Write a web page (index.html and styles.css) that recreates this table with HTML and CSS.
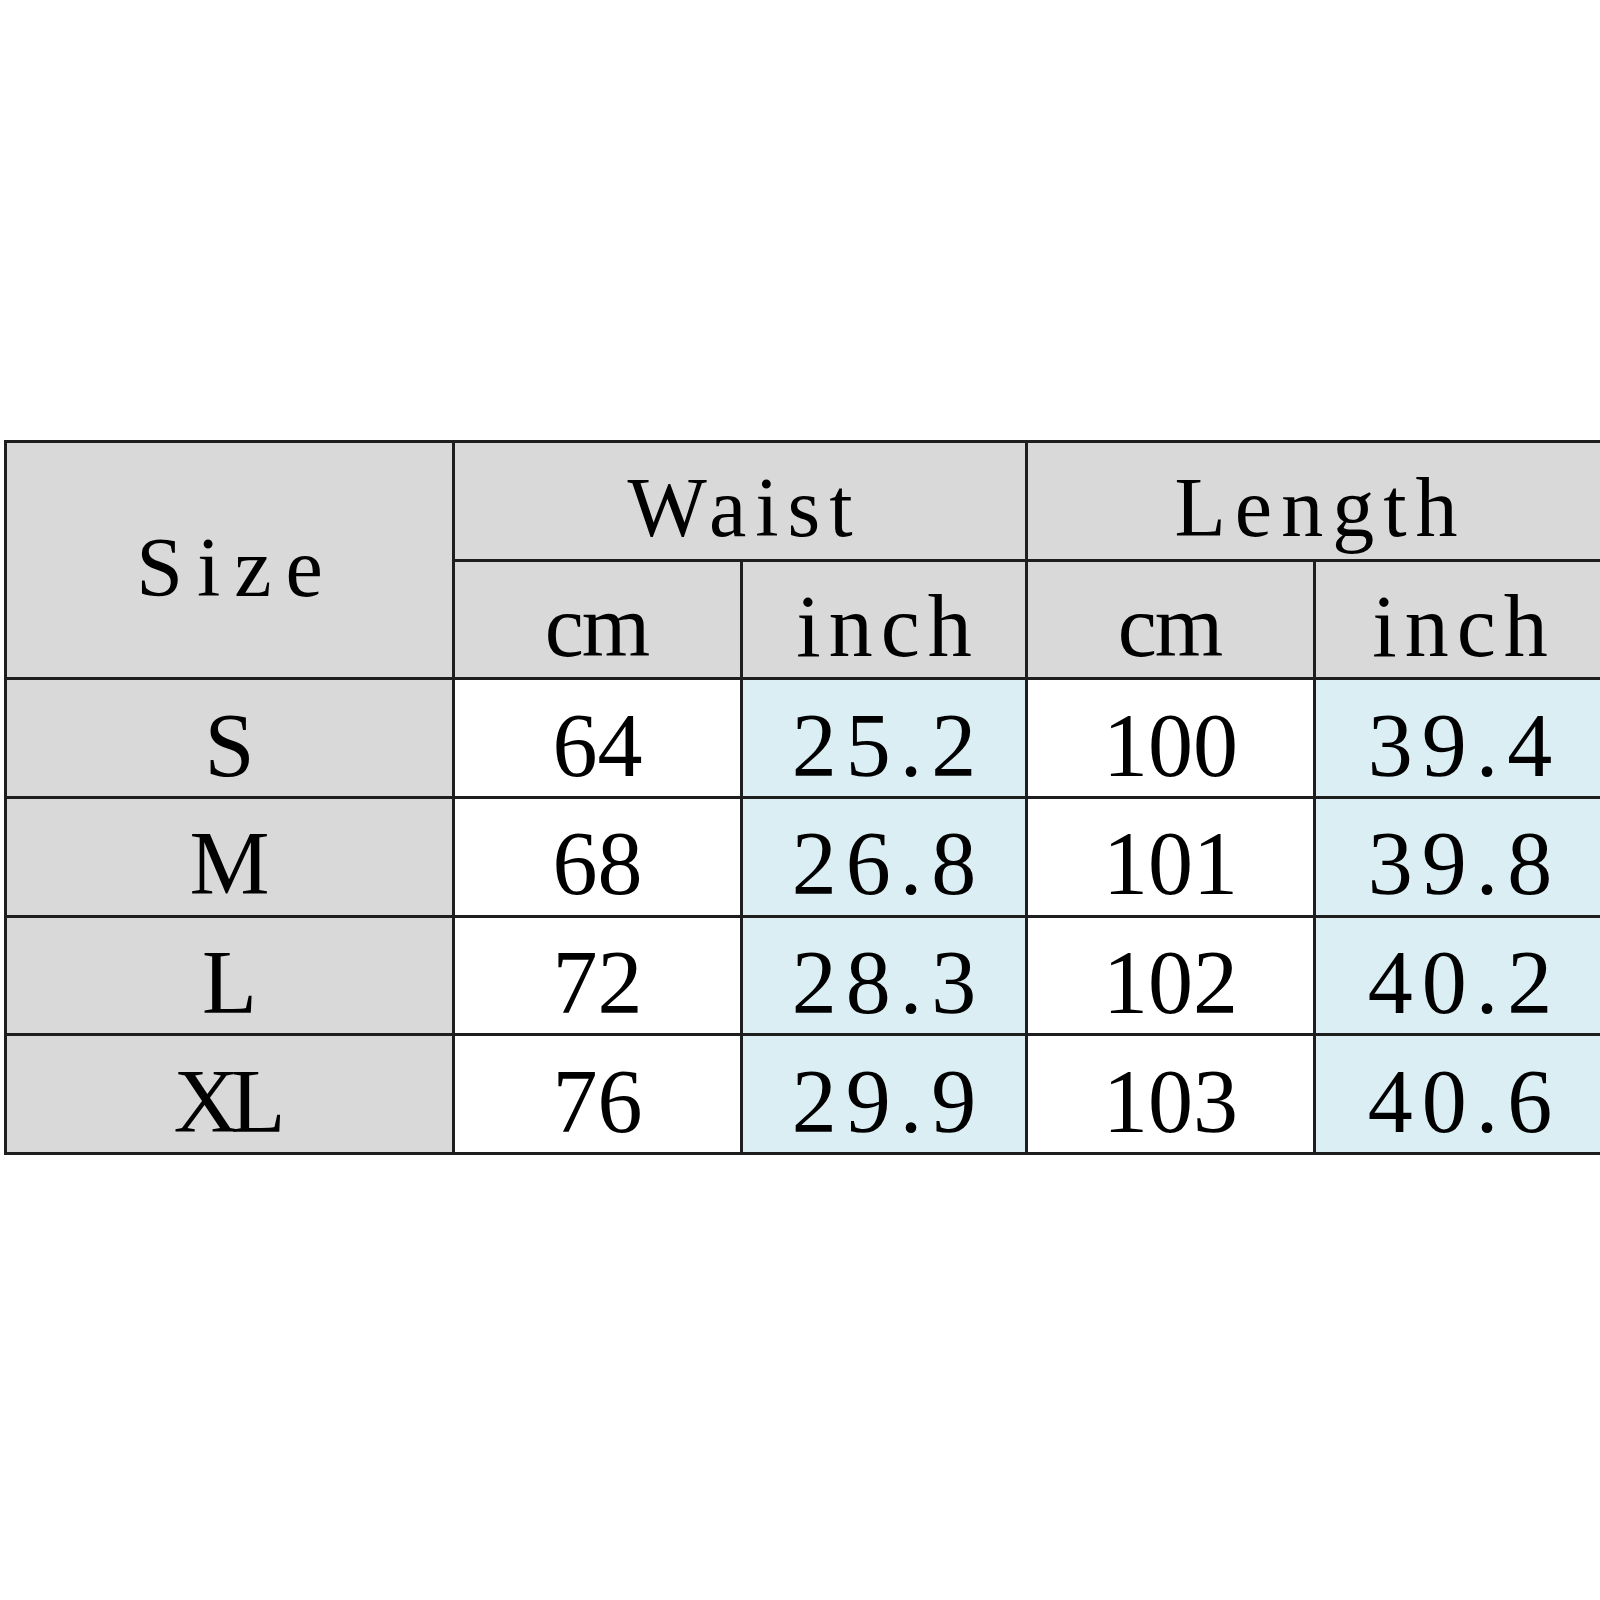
FILE: index.html
```html
<!DOCTYPE html>
<html lang="en">
<head>
<meta charset="utf-8">
<title>Size chart</title>
<link rel="stylesheet" href="styles.css">
</head>
<body>
<main class="page">
  <table class="chart">
    <colgroup>
      <col class="c-size">
      <col class="c-cm">
      <col class="c-in">
      <col class="c-cm">
      <col class="c-in2">
    </colgroup>
    <thead>
      <tr>
        <th class="hd size" rowspan="2">Size</th>
        <th class="hd group" colspan="2">Waist</th>
        <th class="hd group" colspan="2">Length</th>
      </tr>
      <tr>
        <th class="hd unit cm">cm</th>
        <th class="hd unit">inch</th>
        <th class="hd unit cm">cm</th>
        <th class="hd unit">inch</th>
      </tr>
    </thead>
    <tbody>
      <tr><th class="hd lbl">S</th><td class="num">64</td><td class="num blue dec">25.2</td><td class="num">100</td><td class="num blue dec">39.4</td></tr>
      <tr><th class="hd lbl narrow">M</th><td class="num">68</td><td class="num blue dec">26.8</td><td class="num">101</td><td class="num blue dec">39.8</td></tr>
      <tr><th class="hd lbl">L</th><td class="num">72</td><td class="num blue dec">28.3</td><td class="num">102</td><td class="num blue dec">40.2</td></tr>
      <tr><th class="hd lbl narrow">XL</th><td class="num">76</td><td class="num blue dec">29.9</td><td class="num">103</td><td class="num blue dec">40.6</td></tr>
    </tbody>
  </table>
</main>
</body>
</html>
```

FILE: styles.css
```css
html, body {
  margin: 0;
  padding: 0;
  background: #ffffff;
  overflow: hidden;
}

.page {
  padding-top: 440px;
  padding-left: 4px;
  width: 1610px;
}

.chart {
  border-collapse: collapse;
  table-layout: fixed;
  width: 1600px;
  font-family: "Liberation Serif", "Times New Roman", serif;
  color: #000;
}

.c-size { width: 448px; }
.c-cm { width: 288px; }
.c-in { width: 285px; }
.c-in2 { width: 291px; }

.chart th,
.chart td {
  border: 3px solid #1e1e1e;
  height: 100.7px;
  padding: 15px 0 0 0;
  text-align: center;
  font-weight: normal;
  line-height: 1;
  vertical-align: middle;
}

.hd {
  background: #d9d9d9;
}

.blue {
  background: #daeef3;
}

.size {
  font-size: 84px;
  letter-spacing: 14px;
  text-indent: 14px;
}

.group {
  font-size: 84px;
  letter-spacing: 9px;
  text-indent: 9px;
}

.unit {
  font-size: 88px;
  letter-spacing: 8px;
  text-indent: 8px;
}

.unit.cm {
  letter-spacing: -2px;
  text-indent: -2px;
}

.lbl,
.num {
  font-size: 90px;
}

.narrow {
  letter-spacing: -8px;
  text-indent: -8px;
}

.dec {
  letter-spacing: 9px;
  text-indent: 9px;
}
```
